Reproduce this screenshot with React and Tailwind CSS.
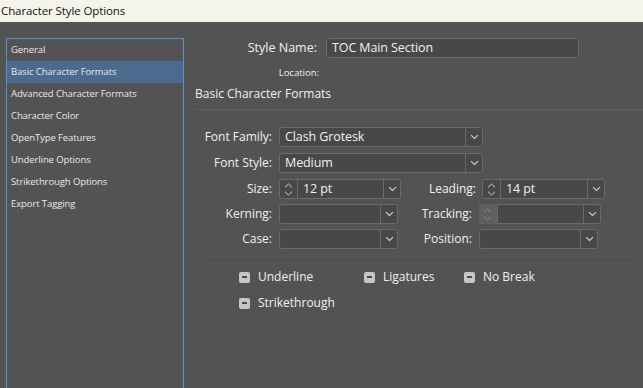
import React from 'react';

const Chevron = () => (
  <svg width="9" height="6" viewBox="0 0 9 6" fill="none" stroke="#d0d0d0" strokeWidth="1.1">
    <path d="M1 1.2 L4.5 4.5 L8 1.2" />
  </svg>
);

const Spinner = ({ disabled }) => (
  <div
    className={`w-[18px] h-full flex flex-col items-center justify-center gap-[3px] border-r ${
      disabled ? 'bg-[#5e5e5e] border-[#5e5e5e]' : 'border-[#6a6a6a]'
    }`}
  >
    <svg width="9" height="5" viewBox="0 0 9 5" fill="none" stroke={disabled ? '#8a8a8a' : '#d0d0d0'} strokeWidth="1">
      <path d="M1 4.3 L4.5 1 L8 4.3" />
    </svg>
    <svg width="9" height="5" viewBox="0 0 9 5" fill="none" stroke={disabled ? '#8a8a8a' : '#d0d0d0'} strokeWidth="1">
      <path d="M1 0.7 L4.5 4 L8 0.7" />
    </svg>
  </div>
);

const Combo = ({ value, width, spinner, disabledSpinner }) => (
  <div className="flex h-[20px]" style={{ width }}>
    {disabledSpinner && (
      <div className="h-full rounded-l-[2px] bg-[#5e5e5e]">
        <Spinner disabled />
      </div>
    )}
    <div
      className={`flex flex-1 h-full border border-[#6a6a6a] bg-[#484848] ${
        disabledSpinner ? 'rounded-r-[3px]' : 'rounded-[3px]'
      }`}
    >
      {spinner && <Spinner />}
      <div className="flex-1 px-[5px] flex items-center text-[12.5px] tracking-[-0.1px] text-[#f0f0f0] leading-none">{value}</div>
      <div className="w-[17px] h-full border-l border-[#6a6a6a] flex items-center justify-center">
        <Chevron />
      </div>
    </div>
  </div>
);

const Check = ({ label }) => (
  <div className="flex items-center gap-[8px]">
    <div className="w-[11px] h-[11px] rounded-[2px] bg-[#c6c6c6] flex items-center justify-center">
      <div className="w-[5px] h-[2px] bg-[#4a4a4a]" />
    </div>
    <span className="text-[12px] text-[#f0f0f0] leading-none">{label}</span>
  </div>
);

const menu = [
  'General',
  'Basic Character Formats',
  'Advanced Character Formats',
  'Character Color',
  'OpenType Features',
  'Underline Options',
  'Strikethrough Options',
  'Export Tagging',
];

export default function App() {
  return (
    <div
      className="w-[643px] h-[388px] overflow-hidden bg-[#535353] flex flex-col"
      style={{ fontFamily: '"Open Sans", "Noto Sans", sans-serif' }}
    >
      <div className="h-[22px] bg-[#f5f4ea] flex items-center px-[1px] text-[11.5px] tracking-[-0.1px] text-[#111] shrink-0">
        Character Style Options
      </div>
      <div className="flex flex-1">
        <div className="ml-[6px] mt-[16px] w-[178px] h-[400px] border border-[#5d8fc8] shrink-0">
          {menu.map((m, i) => (
            <div
              key={m}
              className={`h-[22px] flex items-center px-[4px] text-[9.5px] tracking-[-0.1px] text-[#e8e8e8] ${
                i === 1 ? 'bg-[#4b6a8d]' : ''
              }`}
            >
              {m}
            </div>
          ))}
        </div>

        <div className="flex-1 pl-[11px] pt-[16px] text-[#f0f0f0]">
          <div className="flex items-center h-[20px]">
            <div className="w-[122px] text-right text-[12.5px]">Style Name:</div>
            <div className="ml-[9px] w-[253px] h-[20px] rounded-[3px] border border-[#6a6a6a] bg-[#484848] flex items-center px-[5px] text-[12.5px] tracking-[-0.1px]">
              TOC Main Section
            </div>
          </div>
          <div className="mt-[7px] w-[124px] text-right text-[9.5px] h-[16px] leading-[16px]">Location:</div>
          <div className="mt-[4px] text-[12px] h-[18px] leading-[18px]">Basic Character Formats</div>
          <div className="mt-[6px] h-px bg-[#5f5f5f]" />

          <div className="mt-[17px] flex flex-col gap-[6px] text-[12px]">
            <div className="flex items-center">
              <div className="w-[77px] text-right">Font Family:</div>
              <div className="ml-[7px]"><Combo value="Clash Grotesk" width={204} /></div>
            </div>
            <div className="flex items-center">
              <div className="w-[77px] text-right">Font Style:</div>
              <div className="ml-[7px]"><Combo value="Medium" width={204} /></div>
            </div>
            <div className="flex items-center">
              <div className="w-[77px] text-right">Size:</div>
              <div className="ml-[7px]"><Combo value="12 pt" width={122} spinner /></div>
              <div className="w-[75px] text-right">Leading:</div>
              <div className="ml-[6px]"><Combo value="14 pt" width={123} spinner /></div>
            </div>
            <div className="flex items-center -mt-px">
              <div className="w-[77px] text-right">Kerning:</div>
              <div className="ml-[7px]"><Combo value="" width={119} /></div>
              <div className="w-[74px] text-right">Tracking:</div>
              <div className="ml-[7px]"><Combo value="" width={122} disabledSpinner /></div>
            </div>
            <div className="flex items-center -mt-px">
              <div className="w-[77px] text-right">Case:</div>
              <div className="ml-[7px]"><Combo value="" width={119} /></div>
              <div className="w-[74px] text-right">Position:</div>
              <div className="ml-[7px]"><Combo value="" width={119} /></div>
            </div>
          </div>

          <div className="mt-[10px] ml-[8px] mr-[10px] h-px bg-[#4a4a4a]" />

          <div className="mt-[11px] pl-[44px] flex flex-col gap-[14px]">
            <div className="flex">
              <div className="w-[125px]"><Check label="Underline" /></div>
              <div className="w-[100px]"><Check label="Ligatures" /></div>
              <Check label="No Break" />
            </div>
            <Check label="Strikethrough" />
          </div>
        </div>
      </div>
    </div>
  );
}
